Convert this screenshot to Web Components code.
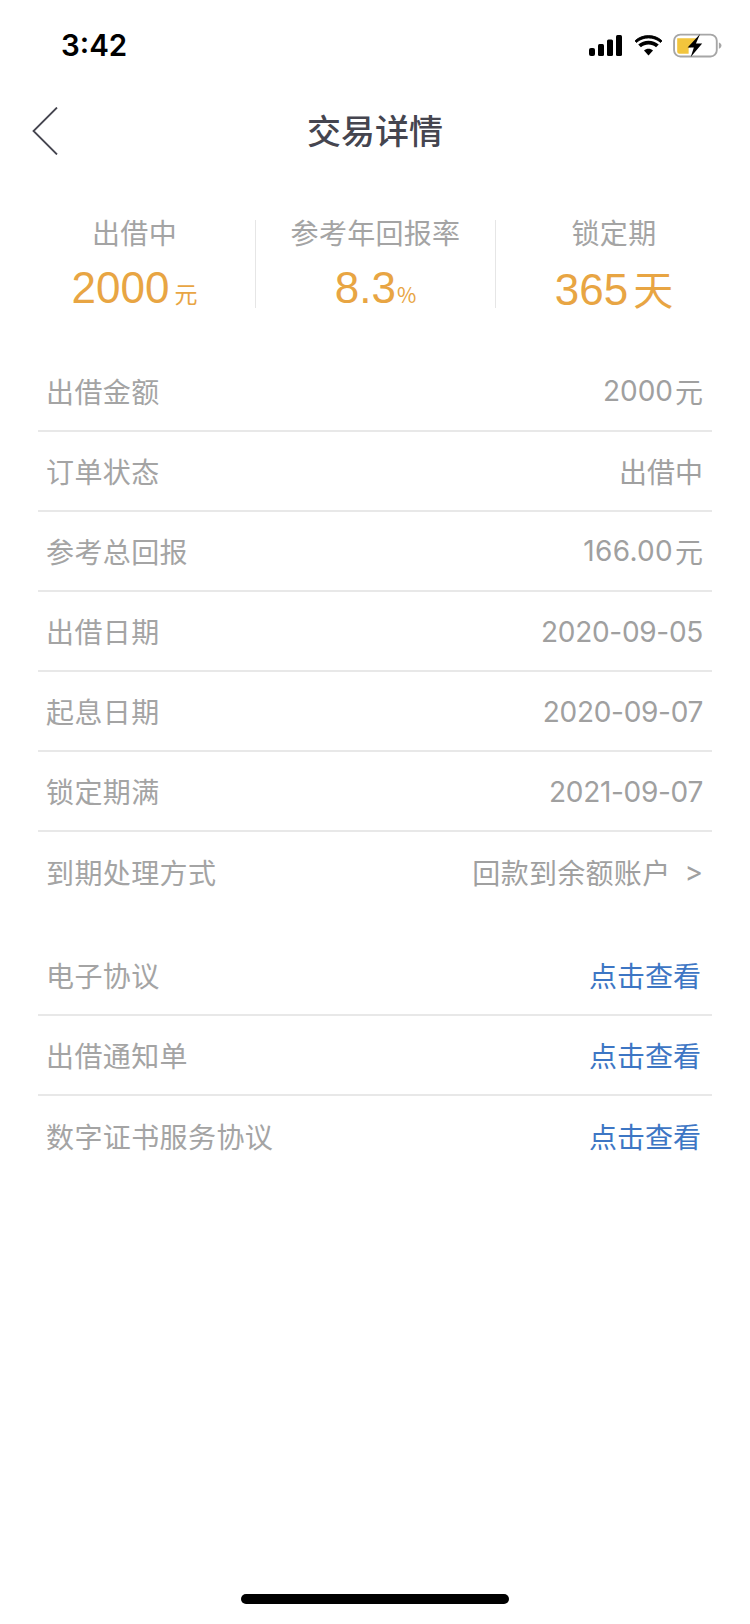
<!DOCTYPE html>
<html>
<head>
<meta charset="utf-8">
<style>
  html, body { margin: 0; padding: 0; background: #fff; }
  body { width: 750px; height: 1624px; overflow: hidden; font-family: "Noto Sans CJK SC", "Liberation Sans", sans-serif; }
  .u { margin-left: 2px; }
  .arrow { margin-left: 14px; }
  .wide { letter-spacing: .3px; }
</style>
</head>
<body>
<status-bar></status-bar>
<nav-bar>交易详情</nav-bar>
<summary-strip>
  <summary-item label="出借中" value="2000" unit="元"></summary-item>
  <summary-item label="参考年回报率" value="8.3" unit="%" small></summary-item>
  <summary-item label="锁定期" value="365" unit="天" big></summary-item>
</summary-strip>
<detail-group style="margin-top:44px">
  <detail-row label="出借金额">2000<span class="u">元</span></detail-row>
  <detail-row label="订单状态">出借中</detail-row>
  <detail-row label="参考总回报"><span class="wide">166.00</span><span class="u">元</span></detail-row>
  <detail-row label="出借日期" date>2020-09-05</detail-row>
  <detail-row label="起息日期" date>2020-09-07</detail-row>
  <detail-row label="锁定期满" date>2021-09-07</detail-row>
  <detail-row label="到期处理方式" last><span class="wide">回款到余额账户</span><span class="arrow">&gt;</span></detail-row>
</detail-group>
<detail-group style="margin-top:24px">
  <detail-row label="电子协议" link>点击查看</detail-row>
  <detail-row label="出借通知单" link>点击查看</detail-row>
  <detail-row label="数字证书服务协议" link last>点击查看</detail-row>
</detail-group>
<home-bar></home-bar>
<script>
class StatusBar extends HTMLElement {
  constructor() {
    super();
    this.attachShadow({ mode: 'open' });
    this.shadowRoot.innerHTML = `
      <style>
        :host { display: flex; height: 90px; box-sizing: border-box; padding: 26px 28px 0 61px; justify-content: space-between; align-items: flex-start; }
        .time { font: 600 29.500px/38px "Inter", "Liberation Sans", sans-serif; color: #000; }
        .icons { display: flex; align-items: center; gap: 11px; height: 38px; }
        .signal { margin-right: 1px; }
        svg { display: block; }
      </style>
      <div class="time">3:42</div>
      <div class="icons">
        <svg class="signal" width="34" height="21" viewBox="0 0 34 21"><rect x="0" y="13" width="6" height="8" rx="2"/><rect x="9" y="9" width="6" height="12" rx="1.500"/><rect x="18" y="4.500" width="6" height="16.500" rx="1.500"/><rect x="27" y="0" width="6" height="21" rx="1.500"/></svg>
        <svg width="27" height="21" viewBox="0 0 30 22"><path d="M15 22l-5-5.500c2.800-2.400 7.200-2.400 10 0z"/><path d="M6.600 13l-3-3.200c6.300-5.600 16.500-5.600 22.800 0l-3 3.200c-4.700-4-12.100-4-16.800 0z"/><path d="M1.600 7.600L0 5.800c8-7.700 22-7.700 30 0l-1.600 1.800C21.200.900 8.800.900 1.600 7.600z" stroke="#000" stroke-width="1"/></svg>
        <svg width="49" height="25" viewBox="0 0 47 24"><rect x="1" y="1.500" width="41" height="21" rx="6" fill="#fff" stroke="#a6a6a6" stroke-width="1.800"/><path d="M4 5h19l-6 9h-2v6H6a2 2 0 0 1-2-2z" fill="#f2c53d"/><path d="M44 9c1.500.5 2.500 1.500 2.500 3s-1 2.500-2.500 3z" fill="#a6a6a6"/><path d="M26 1L14 14h6l-3 9 11-13h-6z" fill="#000"/></svg>
      </div>`;
  }
}
class NavBar extends HTMLElement {
  constructor() {
    super();
    this.attachShadow({ mode: 'open' });
    this.shadowRoot.innerHTML = `
      <style>
        :host { display: flex; height: 84px; box-sizing: border-box; padding-bottom: 6px; align-items: center; justify-content: center; position: relative; font-size: 34px; font-weight: 500; color: #45454f; }
        svg { position: absolute; left: 32px; top: 17px; }
      </style>
      <svg width="26" height="48" viewBox="0 0 26 48"><path d="M25 .5L1.500 24 25 47.500" fill="none" stroke="#45454f" stroke-width="1.800"/></svg>
      <slot></slot>`;
  }
}
class SummaryStrip extends HTMLElement {
  constructor() {
    super();
    this.attachShadow({ mode: 'open' });
    this.shadowRoot.innerHTML = `
      <style>
        :host { display: grid; grid-template-columns: 242px 240px 1fr; margin-top: 46px; padding: 0 18px 0 14px; height: 88px; }
      </style>
      <slot></slot>`;
  }
}
class SummaryItem extends HTMLElement {
  constructor() {
    super();
    this.attachShadow({ mode: 'open' });
    const big = this.hasAttribute('big');
    const small = this.hasAttribute('small');
    this.shadowRoot.innerHTML = `
      <style>
        :host { display: flex; flex-direction: column; align-items: center; border-right: 1px solid #e6e6e6; height: 88px; }
        :host(:last-child) { border-right: none; }
        .label { font-size: 28px; line-height: 30px; letter-spacing: .3px; color: #a4a4a4; margin-top: -3px; }
        .value { margin-top: 16px; font-size: 44px; line-height: 50px; color: #e8a543; display: flex; align-items: baseline; font-family: "Liberation Sans", sans-serif; }
        .unit { font-size: ${big ? 40 : (small ? 21 : 23)}px; margin-left: ${small ? 1 : 5}px; font-family: "Noto Sans CJK SC", sans-serif; }
      </style>
      <div class="label"></div>
      <div class="value"><span class="num"></span><span class="unit"></span></div>`;
    this.shadowRoot.querySelector('.label').textContent = this.getAttribute('label');
    this.shadowRoot.querySelector('.num').textContent = this.getAttribute('value');
    this.shadowRoot.querySelector('.unit').textContent = this.getAttribute('unit');
  }
}
class DetailGroup extends HTMLElement {
  constructor() {
    super();
    this.attachShadow({ mode: 'open' });
    this.shadowRoot.innerHTML = `
      <style>:host { display: block; margin: 0 38px; }</style>
      <slot></slot>`;
  }
}
class DetailRow extends HTMLElement {
  constructor() {
    super();
    this.attachShadow({ mode: 'open' });
    const last = this.hasAttribute('last');
    const link = this.hasAttribute('link');
    const date = this.hasAttribute('date');
    this.shadowRoot.innerHTML = `
      <style>
        :host { display: flex; justify-content: space-between; align-items: center; height: 80px; box-sizing: border-box; padding: 0 ${link ? 11 : 9}px 0 8px; font-size: 28px; letter-spacing: .4px; color: #a4a4a4; border-bottom: ${last ? 'none' : '2px solid #e8e8e8'}; }
        .val { color: ${link ? '#3d76c4' : '#a0a0a0'}; font-family: "Inter", "Noto Sans CJK SC", sans-serif; letter-spacing: ${date ? '-.3px' : '0'}; padding-top: ${date ? 2 : 0}px; display: flex; align-items: center; }
      </style>
      <div class="lab"></div>
      <div class="val"><slot></slot></div>`;
    this.shadowRoot.querySelector('.lab').textContent = this.getAttribute('label');
  }
}
class HomeBar extends HTMLElement {
  constructor() {
    super();
    this.attachShadow({ mode: 'open' });
    this.shadowRoot.innerHTML = `
      <style>
        :host { display: block; position: absolute; left: 241px; top: 1594px; width: 268px; height: 10px; border-radius: 5px; background: #000; }
      </style>`;
  }
}
customElements.define('status-bar', StatusBar);
customElements.define('nav-bar', NavBar);
customElements.define('summary-strip', SummaryStrip);
customElements.define('summary-item', SummaryItem);
customElements.define('detail-group', DetailGroup);
customElements.define('detail-row', DetailRow);
customElements.define('home-bar', HomeBar);
</script>
</body>
</html>
